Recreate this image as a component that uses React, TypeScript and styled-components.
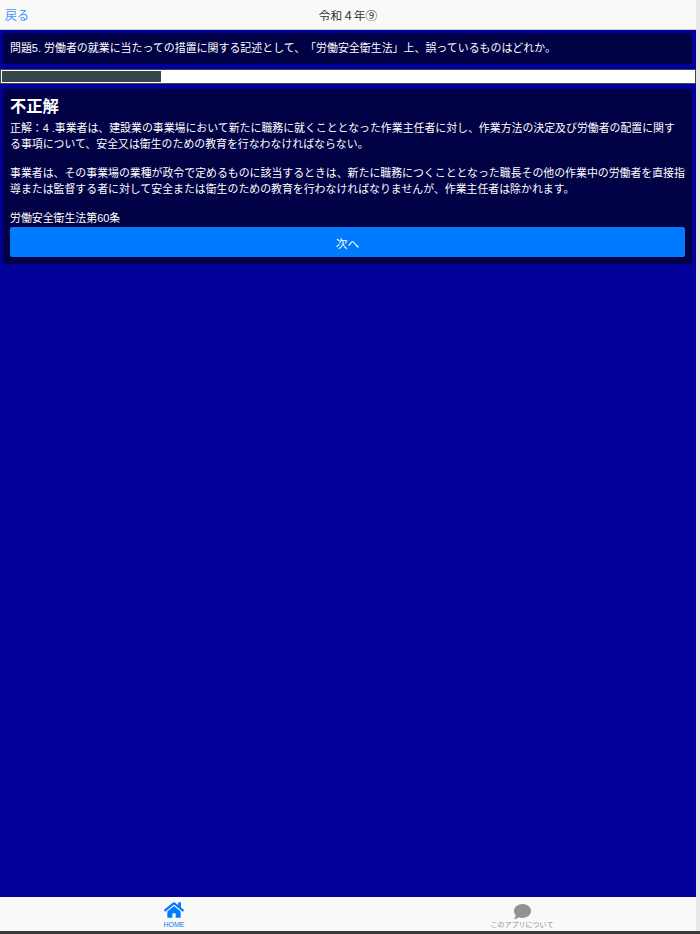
import React from 'react';
import styled, { createGlobalStyle } from 'styled-components';
import { FaComment, FaHome } from 'react-icons/fa';

const GlobalStyle = createGlobalStyle`
  html, body {
    margin: 0;
    padding: 0;
    height: 100%;
    overflow: hidden;
  }
  body {
    font-family: "Liberation Sans", "Noto Sans CJK JP", sans-serif;
    background: #3a3a3a;
    text-spacing-trim: space-all;
  }
  #root {
    height: 100%;
  }
`;

function App() {
  return (
    <>
      <GlobalStyle />
      <Page>
        <Main>
          <Header>
            <BackLink>戻る</BackLink>
            <Title>令和４年⑨</Title>
          </Header>
          <Content>
            <QuestionCard>問題5. 労働者の就業に当たっての措置に関する記述として、「労働安全衛生法」上、誤っているものはどれか。</QuestionCard>
            <ProgressTrack>
              <ProgressBar style={{ width: `${(5 / 21.7) * 100}%` }} />
            </ProgressTrack>
            <ResultCard>
              <ResultTitle>不正解</ResultTitle>
              <ResultText>
                正解：4 .事業者は、建設業の事業場において新たに職務に就くこととなった作業主任者に対し、作業方法の決定及び労働者の配置に関する事項について、安全又は衛生のための教育を行なわなければならない。
              </ResultText>
              <ResultText>
                事業者は、その事業場の業種が政令で定めるものに該当するときは、新たに職務につくこととなった職長その他の作業中の労働者を直接指導または監督する者に対して安全または衛生のための教育を行わなければなりませんが、作業主任者は除かれます。
              </ResultText>
              <LawText>労働安全衛生法第60条</LawText>
              <NextButton>次へ</NextButton>
            </ResultCard>
          </Content>
          <TabBar>
            <TabItem $active>
              <FaHome size={20} />
              <TabLabel>HOME</TabLabel>
            </TabItem>
            <TabItem>
              <FaComment size={17} />
              <TabLabel>このアプリについて</TabLabel>
            </TabItem>
          </TabBar>
        </Main>
        <ScrollEdge />
      </Page>
    </>
  );
}

const Page = styled.div`
  display: flex;
  height: 931px;
`;
const Main = styled.div`
  flex: 1;
  min-width: 0;
  display: flex;
  flex-direction: column;
`;
const ScrollEdge = styled.div`
  width: 4px;
  background: #e8e8e8;
`;
const Header = styled.header`
  position: relative;
  height: 29px;
  flex-shrink: 0;
  display: flex;
  align-items: center;
  justify-content: center;
  background: #f9f9f9;
  border-bottom: 1px solid #cfcfd6;
`;
const BackLink = styled.a`
  position: absolute;
  left: 5px;
  top: 8px;
  font-size: 12px;
  line-height: 16px;
  color: #3d94ff;
`;
const Title = styled.div`
  font-size: 11.7px;
  color: #333;
`;
const Content = styled.main`
  flex: 1;
  background: #000099;
  padding: 3px 0 0;
  display: flex;
  flex-direction: column;
`;
const QuestionCard = styled.div`
  margin: 0 4px 0 3px;
  padding: 7px 7px;
  height: 31px;
  box-sizing: border-box;
  background: #000044;
  border-radius: 3px;
  color: #fff;
  font-size: 10.95px;
  line-height: 16px;
`;
const ProgressTrack = styled.div`
  margin-top: 5px;
  height: 15px;
  box-sizing: border-box;
  background: #fff;
  border: 1px solid #444;
  padding: 1px;
`;
const ProgressBar = styled.div`
  height: 100%;
  background: #37474f;
`;
const ResultCard = styled.section`
  margin: 5px 4px 0 3px;
  padding: 6px 7px 7px;
  background: #000044;
  border-radius: 3px;
  color: #fff;
`;
const ResultTitle = styled.h2`
  margin: 0 0 3px;
  font-size: 16.3px;
  line-height: 22px;
  font-weight: bold;
`;
const ResultText = styled.p`
  margin: 0 0 13px;
  font-size: 10.9px;
  line-height: 16px;
`;
const LawText = styled.div`
  margin-bottom: 1px;
  font-size: 10.9px;
  line-height: 16px;
`;
const NextButton = styled.button`
  display: block;
  width: 100%;
  height: 30px;
  border: 0;
  border-radius: 2px;
  background: #007aff;
  color: #fff;
  font-family: inherit;
  font-size: 11.7px;
`;
const TabBar = styled.nav`
  height: 34px;
  flex-shrink: 0;
  display: flex;
  background: #f9f9f9;
`;
const TabItem = styled.div<{ $active?: boolean }>`
  flex: 1;
  display: flex;
  flex-direction: column;
  align-items: center;
  justify-content: flex-end;
  color: ${(p) => (p.$active ? '#007aff' : '#929292')};
`;
const TabLabel = styled.span`
  font-size: 7px;
  line-height: 9px;
  margin-bottom: 2px;
`;

export default App;
